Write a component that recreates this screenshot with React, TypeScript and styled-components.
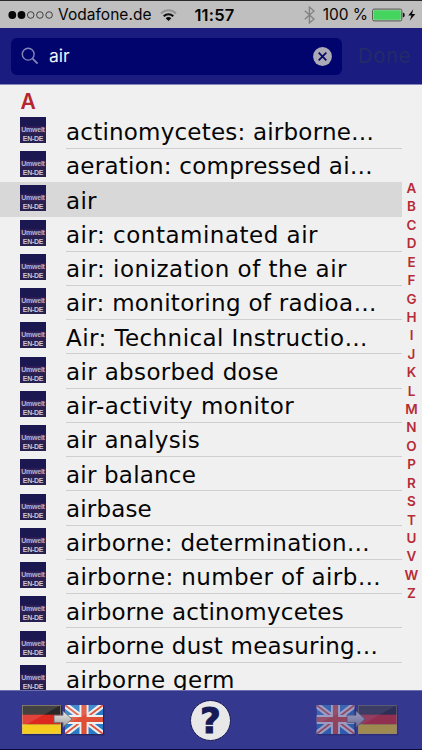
import React from "react";
import styled, { createGlobalStyle } from "styled-components";

const GlobalStyle = createGlobalStyle`
  * { box-sizing: border-box; }
  body { margin: 0; background: #f0f0f1; }
`;

const Screen = styled.div`
  width: 422px;
  height: 750px;
  display: flex;
  flex-direction: column;
  overflow: hidden;
  background: #f0f0f1;
  color: #050505;
  font-family: Inter, "Liberation Sans", sans-serif;
`;

const StatusBar = styled.header`
  display: grid;
  grid-template-columns: 1fr auto 1fr;
  align-items: center;
  height: 28px;
  flex: none;
  padding: 1px 6px 0 8px;
  border-top: 1px solid #29282c;
  background: #bfbfbf;
  font-size: 15.5px;
  line-height: 26px;
  white-space: nowrap;
`;

const Carrier = styled.div`
  display: flex;
  align-items: center;
`;

const CarrierName = styled.span`
  margin: 0 8px 0 5px;
  letter-spacing: 0.03px;
`;

const Clock = styled.div`
  font-weight: 600;
  font-size: 16.5px;
  letter-spacing: 0.2px;
  transform: translateX(2.5px);
`;

const Power = styled.div`
  display: flex;
  align-items: center;
  justify-content: flex-end;
`;

const Percent = styled.span`
  margin: 0 4px 0 8px;
  font-size: 15.5px;
  letter-spacing: -0.05px;
`;

const SearchHeader = styled.div`
  display: flex;
  align-items: center;
  height: 57px;
  flex: none;
  padding: 0 11px;
  background: #1a1c80;
  border-bottom: 1px solid #8587b8;
`;

const SearchField = styled.div`
  display: flex;
  align-items: center;
  width: 331px;
  height: 37px;
  padding: 0 10px;
  border-radius: 6px;
  background: #02046d;
`;

const Query = styled.span`
  flex: 1;
  margin: -1px 0 0 10px;
  color: #f2f2fa;
  font-size: 17.5px;
  letter-spacing: 0;
`;

const DoneButton = styled.button`
  margin: -1px 0 0 16px;
  padding: 0;
  border: 0;
  background: none;
  color: #252a68;
  font: 400 20.5px Inter, sans-serif;
  letter-spacing: 0.5px;
`;

const Content = styled.main`
  display: flex;
  flex: 1;
  min-height: 0;
  overflow: hidden;
`;

const List = styled.section`
  width: 402px;
  flex: none;
`;

const SectionTitle = styled.h2`
  height: 28.9px;
  margin: 0;
  padding: 3px 0 0 20.5px;
  color: #b5262e;
  font: 600 21px/27px Inter, sans-serif;
`;

const Row = styled.div<{ $selected?: boolean }>`
  display: flex;
  height: 34.25px;
  padding-left: 20px;
  background: ${(p) => (p.$selected ? "#d8d8d8" : "transparent")};
`;

const BookIcon = styled.div`
  display: flex;
  flex-direction: column;
  align-items: center;
  width: 26px;
  height: 26px;
  margin: 3px 20px 0 0;
  padding-top: 8px;
  overflow: hidden;
  background: linear-gradient(#1b1750 0 32%, #352057 40% 58%, #28204e 66%);
  color: #c6c6da;
  font: 700 7px/9px "Liberation Sans", sans-serif;
  letter-spacing: -0.25px;
`;

const BookLine = styled.span<{ $faded?: boolean }>`
  display: block;
  height: 9px;
  opacity: ${(p) => (p.$faded ? 0.88 : 1)};
`;

const Term = styled.div<{ $spacing: number; $line: boolean }>`
  flex: 1;
  height: 34.9px;
  padding-top: 0.15px;
  border-bottom: 1px solid ${(p) => (p.$line ? "#cfcfd2" : "transparent")};
  font: 400 23px/37.5px "DejaVu Sans", Verdana, sans-serif;
  letter-spacing: ${(p) => p.$spacing}px;
  white-space: nowrap;
`;

const LetterIndex = styled.nav`
  display: flex;
  flex-direction: column;
  align-items: center;
  width: 19px;
  padding-top: 94px;
  color: #b62c35;
  font: 600 13.5px/18.43px Inter, sans-serif;
`;

const Letter = styled.span`
  height: 18.43px;
  flex: none;
`;

const Toolbar = styled.footer`
  display: flex;
  align-items: center;
  justify-content: space-between;
  height: 60px;
  flex: none;
  padding: 0 19px;
  border-top: 1px solid #6c6fae;
  border-bottom: 1px solid #08083a;
  background: #35388f;
`;

const DirectionSvg = styled.svg<{ $dim?: boolean }>`
  display: block;
  margin-bottom: 2px;
  opacity: ${(p) => (p.$dim ? 0.55 : 1)};
`;

const HelpBadge = styled.div`
  display: flex;
  align-items: center;
  justify-content: center;
  width: 41px;
  height: 41px;
  margin-right: 1px;
  padding-top: 1px;
  border: 1.5px solid #181b55;
  border-radius: 50%;
  background: #e8e8e8;
  color: #171a57;
  font: 700 36px/38px "DejaVu Sans", sans-serif;
  -webkit-text-stroke: 1px #171a57;
`;

const terms: [string, number][] = [
  ["actinomycetes: airborne…", 0.21],
  ["aeration: compressed ai…", 0.24],
  ["air", 0.3],
  ["air: contaminated air", 0.5],
  ["air: ionization of the air", 0.5],
  ["air: monitoring of radioa…", 0.31],
  ["Air: Technical Instructio…", 0.43],
  ["air absorbed dose", 0.35],
  ["air-activity monitor", 0.47],
  ["air analysis", 0.3],
  ["air balance", 0.2],
  ["airbase", 0.15],
  ["airborne: determination…", 0.3],
  ["airborne: number of airb…", 0.38],
  ["airborne actinomycetes", 0.25],
  ["airborne dust measuring…", 0.24],
  ["airborne germ", 0.38],
];

const SignalDots = () => (
  <svg width="45" height="10" viewBox="0 0 45 10">
    {[0, 1, 2, 3, 4].map((i) => (
      <circle key={i} cx={4.3 + i * 9.2} cy="5" r={i < 2 ? 3.9 : 3.3} fill={i < 2 ? "#080808" : "none"} stroke={i < 2 ? "none" : "#333"} strokeWidth=".9" />
    ))}
  </svg>
);

const WifiIcon = () => (
  <svg width="17" height="13" viewBox="0 0 17 13">
    <path d="M1 4.5C5.2.3 11.8.3 16 4.5" fill="none" stroke="#949494" strokeWidth="2" />
    <path d="M3.7 7.2c2.7-2.6 6.9-2.6 9.6 0" fill="none" stroke="#111" strokeWidth="2.1" />
    <path d="M5.7 9.2c1.6-1.5 4-1.5 5.6 0L8.5 12z" fill="#080808" />
  </svg>
);

const BluetoothIcon = () => (
  <svg width="11" height="18" viewBox="0 0 11 18">
    <path d="M.8 4.8l9.2 8.1-4.6 4V1.1l4.6 4-9.2 8.1" fill="none" stroke="#818181" strokeWidth="1.3" />
  </svg>
);

const BatteryIcon = () => (
  <svg width="44" height="16" viewBox="0 0 44 16">
    <rect x=".6" y="2.1" width="29.2" height="11.8" rx="1.5" fill="#c9d0c7" stroke="#4c514b" />
    <rect x="1.7" y="3.2" width="27" height="9.6" rx=".7" fill="#43d55e" />
    <path d="M30.8 5.6q2 .2 2 2.4t-2 2.4z" fill="#161616" />
    <path d="M41.3 2.2l-5 6.2h3.2l-1.8 5.3 5.6-6.6h-3.3z" fill="#080808" />
  </svg>
);

const SearchIcon = () => (
  <svg width="18" height="18" viewBox="0 0 18 18" fill="none" stroke="#8586b8">
    <circle cx="7.2" cy="7.2" r="5.9" strokeWidth="1.4" />
    <path d="M11.6 11.6l5 5" strokeWidth="1.9" />
  </svg>
);

const ClearIcon = () => (
  <svg width="19" height="19" viewBox="0 0 19 19">
    <circle cx="9.5" cy="9.5" r="9.4" fill="#abaab6" />
    <path d="M5.7 5.7l7.6 7.6m0-7.6l-7.6 7.6" stroke="#090a65" strokeWidth="1.8" />
  </svg>
);

const GermanFlag = ({ x }: { x: number }) => (
  <g transform={`translate(${x} 4)`}>
    <rect x="1.2" y="1.4" width="39" height="29" fill="#16183f" opacity=".55" />
    <rect width="39" height="10" fill="#292828" />
    <rect y="9.7" width="39" height="9.7" fill="#dd2820" />
    <rect y="19.3" width="39" height="9.7" fill="#f5cd20" />
    <path d="M0 0h39L0 22z" fill="#fff" opacity=".12" />
    <rect x=".4" y=".4" width="38.2" height="28.2" fill="none" stroke="#cfba93" strokeWidth=".7" opacity=".6" />
  </g>
);

const BritishFlag = ({ x }: { x: number }) => (
  <g transform={`translate(${x} 4)`}>
    <rect x="1.2" y="1.4" width="38" height="29" fill="#16183f" opacity=".55" />
    <svg width="38" height="29" viewBox="0 0 38 29">
      <rect width="38" height="29" fill="#297bc6" />
      <path d="M0 0l38 29M38 0L0 29" stroke="#eee" strokeWidth="6" />
      <path d="M0 0l38 29M38 0L0 29" stroke="#df563f" strokeWidth="1.8" />
      <path d="M19 0v29M0 14.5h38" stroke="#eee" strokeWidth="9" />
      <path d="M19 0v29M0 14.5h38" stroke="#df4f38" strokeWidth="5.2" />
      <path d="M0 0h38L0 20z" fill="#fff" opacity=".12" />
    </svg>
  </g>
);

const DirectionIcon = ({ reverse }: { reverse?: boolean }) => (
  <DirectionSvg $dim={reverse} width="88" height="37" viewBox="0 0 88 37">
    <defs>
      <linearGradient id={reverse ? "arrow-r" : "arrow-l"} x1="0" x2="0" y1="0" y2="1">
        <stop stopColor="#eee" />
        <stop offset="1" stopColor="#999" />
      </linearGradient>
    </defs>
    {reverse ? <BritishFlag x={1.5} /> : <GermanFlag x={3} />}
    {reverse ? <GermanFlag x={43} /> : <BritishFlag x={46} />}
    <path
      transform={reverse ? "translate(-3 0)" : undefined}
      d="M35 14.2h9V10l9 8-9 8.3v-4.6h-9z"
      fill={`url(#${reverse ? "arrow-r" : "arrow-l"})`}
      stroke="#666"
      strokeWidth=".8"
    />
  </DirectionSvg>
);

export default function App() {
  return (
    <Screen>
      <GlobalStyle />
      <StatusBar>
        <Carrier>
          <SignalDots />
          <CarrierName>Vodafone.de</CarrierName>
          <WifiIcon />
        </Carrier>
        <Clock>11:57</Clock>
        <Power>
          <BluetoothIcon />
          <Percent>100 %</Percent>
          <BatteryIcon />
        </Power>
      </StatusBar>
      <SearchHeader>
        <SearchField>
          <SearchIcon />
          <Query>air</Query>
          <ClearIcon />
        </SearchField>
        <DoneButton>Done</DoneButton>
      </SearchHeader>
      <Content>
        <List>
          <SectionTitle>A</SectionTitle>
          {terms.map(([term, spacing], i) => (
            <Row key={term} $selected={i === 2}>
              <BookIcon>
                <BookLine $faded>Umwelt</BookLine>
                <BookLine>EN-DE</BookLine>
              </BookIcon>
              <Term $spacing={spacing} $line={i !== 1 && i !== 2}>{term}</Term>
            </Row>
          ))}
        </List>
        <LetterIndex>
          {"ABCDEFGHIJKLMNOPRSTUVWZ".split("").map((l) => (
            <Letter key={l}>{l}</Letter>
          ))}
        </LetterIndex>
      </Content>
      <Toolbar>
        <DirectionIcon />
        <HelpBadge>?</HelpBadge>
        <DirectionIcon reverse />
      </Toolbar>
    </Screen>
  );
}
